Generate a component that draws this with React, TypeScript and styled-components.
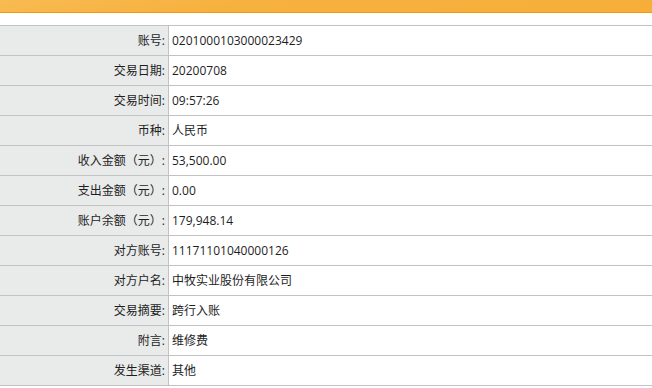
import React from 'react';
import styled, { createGlobalStyle } from 'styled-components';

const GlobalStyle = createGlobalStyle`
  html, body {
    margin: 0;
    padding: 0;
    background: #ffffff;
  }
  body {
    font-family: "Open Sans", "Noto Sans CJK SC", sans-serif;
    font-size: 12px;
    color: #1e1e1e;
  }
`;

const Page = styled.div`
  width: 652px;
  overflow: hidden;
`;

const TopBar = styled.div`
  height: 12px;
  background: linear-gradient(170deg, #f8bb52 0%, #f7b13f 35%, #f6ae39 100%);
  border-bottom: 1px solid #ee9b12;
`;

const DetailList = styled.div`
  margin-top: 12px;
  border-top: 1px solid #c2c2c2;
`;

const Row = styled.div`
  display: grid;
  grid-template-columns: 169px 1fr;
  height: 29px;
  border-bottom: 1px solid #c2c2c2;
`;

const Label = styled.div`
  background: #e9eaea;
  border-right: 1px solid #c2c2c2;
  text-align: right;
  padding-right: 3px;
  line-height: 29px;
  white-space: nowrap;
`;

const Value = styled.div`
  padding-left: 3px;
  line-height: 29px;
  white-space: nowrap;
`;

interface Detail {
  label: string;
  value: string;
}

const details: Detail[] = [
  { label: '账号', value: '0201000103000023429' },
  { label: '交易日期', value: '20200708' },
  { label: '交易时间', value: '09:57:26' },
  { label: '币种', value: '人民币' },
  { label: '收入金额（元）', value: '53,500.00' },
  { label: '支出金额（元）', value: '0.00' },
  { label: '账户余额（元）', value: '179,948.14' },
  { label: '对方账号', value: '11171101040000126' },
  { label: '对方户名', value: '中牧实业股份有限公司' },
  { label: '交易摘要', value: '跨行入账' },
  { label: '附言', value: '维修费' },
  { label: '发生渠道', value: '其他' },
];

export default function App() {
  return (
    <Page>
      <GlobalStyle />
      <TopBar />
      <DetailList>
        {details.map((d) => (
          <Row key={d.label}>
            <Label>{d.label}:</Label>
            <Value>{d.value}</Value>
          </Row>
        ))}
      </DetailList>
    </Page>
  );
}
